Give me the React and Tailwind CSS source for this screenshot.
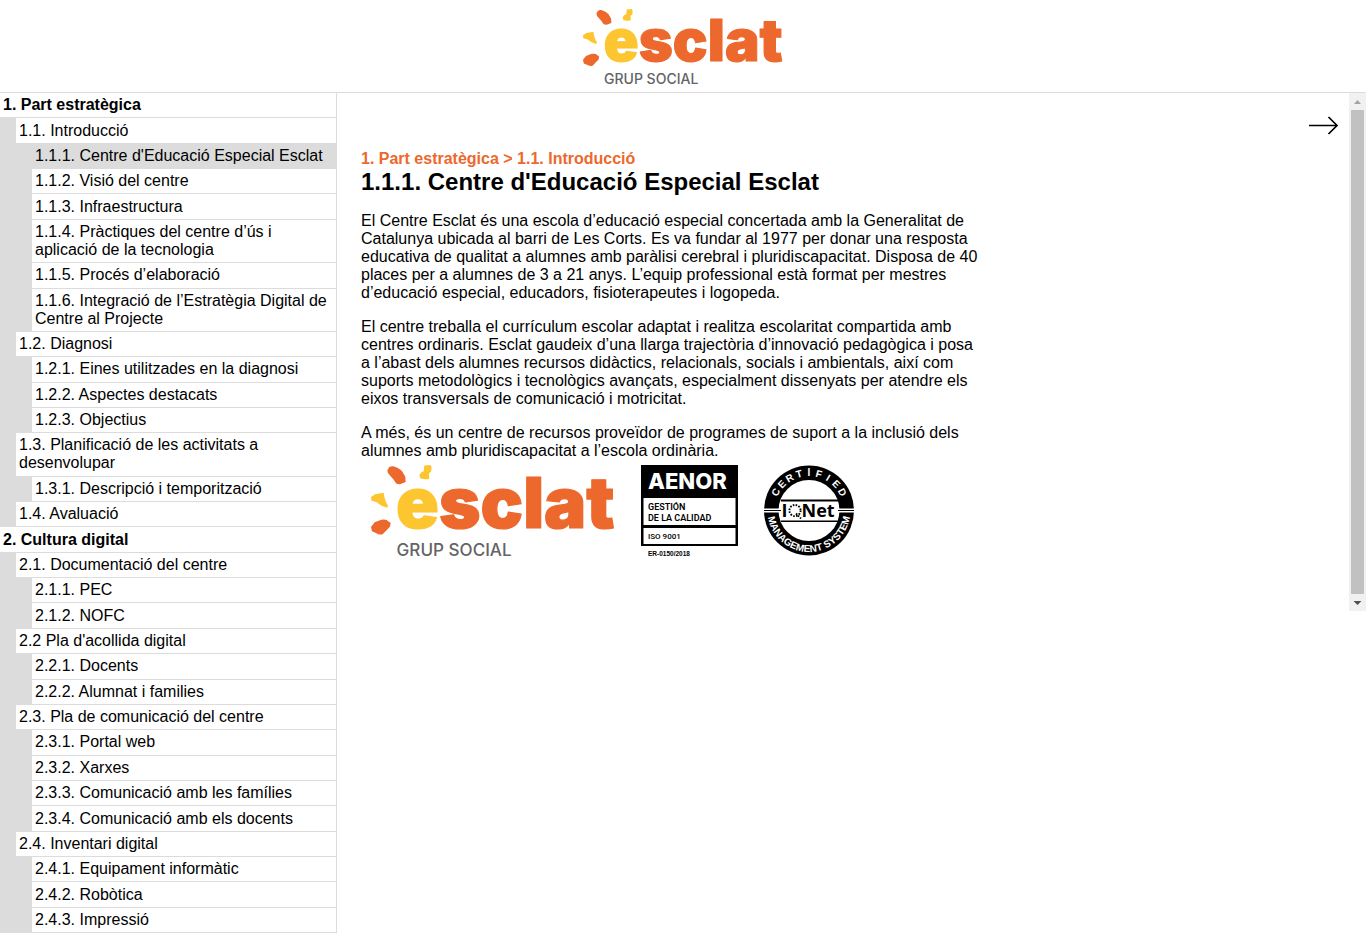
import React from "react";

const sections = [
  [1, "1. Part estratègica"],
  [2, "1.1. Introducció"],
  [3, "1.1.1. Centre d'Educació Especial Esclat"],
  [3, "1.1.2. Visió del centre"],
  [3, "1.1.3. Infraestructura"],
  [3, "1.1.4. Pràctiques del centre d’ús i aplicació de la tecnologia"],
  [3, "1.1.5. Procés d’elaboració"],
  [3, "1.1.6. Integració de l’Estratègia Digital de Centre al Projecte"],
  [2, "1.2. Diagnosi"],
  [3, "1.2.1. Eines utilitzades en la diagnosi"],
  [3, "1.2.2. Aspectes destacats"],
  [3, "1.2.3. Objectius"],
  [2, "1.3. Planificació de les activitats a desenvolupar"],
  [3, "1.3.1. Descripció i temporització"],
  [2, "1.4. Avaluació"],
  [1, "2. Cultura digital"],
  [2, "2.1. Documentació del centre"],
  [3, "2.1.1. PEC"],
  [3, "2.1.2. NOFC"],
  [2, "2.2 Pla d'acollida digital"],
  [3, "2.2.1. Docents"],
  [3, "2.2.2. Alumnat i families"],
  [2, "2.3. Pla de comunicació del centre"],
  [3, "2.3.1. Portal web"],
  [3, "2.3.2. Xarxes"],
  [3, "2.3.3. Comunicació amb les famílies"],
  [3, "2.3.4. Comunicació amb els docents"],
  [2, "2.4. Inventari digital"],
  [3, "2.4.1. Equipament informàtic"],
  [3, "2.4.2. Robòtica"],
  [3, "2.4.3. Impressió"],
];

const levelClass = {
  1: "font-bold",
  2: "border-l-[16px]",
  3: "border-l-[32px]",
};

const activeIndex = 2;

function EsclatLogo({ className }) {
  return (
    <svg viewBox="0 0 200 76" className={`overflow-visible ${className}`} role="img" aria-label="Esclat Grup Social">
      <g fill="#ed682c">
        <path d="M13.4 4.6 14.8 1.9Q16.500 .6 18.300 1.100L22.100 2.500 25.400 4.900 28.100 9.600 28.400 13.900 24.300 15.600Q22 16 20.500 15L18.300 11.700 15.600 8.700Q13.400 7 13.400 4.600Z" />
        <path d="M0 50.800 3 47 7.900 45.100Q10.500 44.200 12.800 45.100L16.100 47.500 15.600 50.500 12.600 53.600 9.600 56.800Q7.500 57.400 5.700 56.600L.8 54.400Z" />
      </g>
      <g fill="#fdc52f">
        <path d="M43.700 .5 48.900 0 49.700 1.900 49.200 5.500 47.500 6.800 47.800 11.200Q44 12.300 40.400 10.900L39.600 8.200 41.300 6 43.200 5.200Z" />
        <path d="M0 26.200 3.300 24 10.400 22.700 10.900 26 12 29.800 13.900 33.300 13.400 35 8.500 33.300 4.600 30.600 .3 29.200Z" />
      </g>
      <text x="20.500" y="52" fontFamily="Inter, sans-serif" fontWeight="900" fontSize="58" strokeWidth="1" strokeLinejoin="round">
        <tspan fill="#fdc52f" stroke="#fdc52f">e</tspan>
        <tspan fill="#ed682c" stroke="#ed682c">sclat</tspan>
      </text>
      <text x="21" y="75" fontFamily="Inter, sans-serif" fontWeight="500" fontSize="14" fill="#636466">
        GRUP SOCIAL
      </text>
    </svg>
  );
}

function AenorBadge() {
  return (
    <svg viewBox="0 0 97 93" className="w-[97px] shrink-0" role="img" aria-label="AENOR ISO 9001">
      <path d="M0 0H97V81H0Z" fill="#000" />
      <path d="M2.500 33H94.500V60H2.500ZM2.500 63H94.500V79H2.500Z" fill="#fff" />
      <text x="7" y="24" fontFamily="Inter, sans-serif" fontWeight="800" fontSize="22" fill="#fff">AENOR</text>
      <g fontFamily="Roboto, sans-serif" fill="#000">
        <text x="7" y="45" fontWeight="600" fontSize="9">GESTIÓN</text>
        <text x="7" y="56" fontWeight="600" fontSize="9">DE LA CALIDAD</text>
        <text x="7" y="74" fontWeight="500" fontSize="8">ISO 9001</text>
      </g>
      <text x="7" y="91" fontFamily="Liberation Sans, sans-serif" fontWeight="700" fontSize="6.500">ER-0150/2018</text>
    </svg>
  );
}

function IQNetBadge() {
  return (
    <svg viewBox="0 0 90 92" className="w-[90px] shrink-0" role="img" aria-label="IQNet Certified Management System">
      <defs>
        <path id="iqnet-top" d="M10.500 45.500A34.500 34.500 0 0 1 79.500 45.500" />
        <path id="iqnet-bottom" d="M3.500 45.500A41.500 41.500 0 0 0 86.500 45.500" />
      </defs>
      <circle cx="45" cy="45.500" r="45" fill="#000" />
      <circle cx="45" cy="45.500" r="30.500" fill="#fff" />
      <path d="M0 43.500H90V47.500H0Z" fill="#fff" />
      <path d="M0 45H90V46H0Z" fill="#000" />
      <path d="M17 35H74V57H17Z" fill="#fff" />
      <path d="M17 34.500H74V36.500H17ZM17 55.500H74V57H17Z" fill="#000" />
      <g fontFamily="Open Sans, sans-serif" fontWeight="700" fontSize="18" fill="#000">
        <text x="17.500" y="52">I</text>
        <text x="37.500" y="52">Net</text>
      </g>
      <circle cx="31" cy="45.500" r="5.600" fill="none" stroke="#000" strokeWidth="1.900" strokeDasharray="1.600 1.330" />
      <path d="M32 48.500 37 53.500" stroke="#000" strokeWidth="1.900" strokeDasharray="1.600 1.300" />
      <text fontFamily="Liberation Sans, sans-serif" fontWeight="700" fontSize="10" fill="#fff" textAnchor="middle">
        {"CERTIFIED".split("").map((letter, i) => (
          <textPath key={i} href="#iqnet-top" startOffset={`${16 + i * 8.5}%`}>{letter}</textPath>
        ))}
      </text>
      <text fontFamily="Liberation Sans, sans-serif" fontWeight="700" fontSize="10" fill="#fff" textAnchor="middle">
        <textPath href="#iqnet-bottom" startOffset="50%">MANAGEMENT SYSTEM</textPath>
      </text>
    </svg>
  );
}

function ScrollBar() {
  return (
    <div className="flex w-[17px] shrink-0 flex-col bg-[#f1f1f1]" aria-hidden="true">
      <svg viewBox="0 0 17 17" className="h-[17px] w-[17px]">
        <path d="M5 11 8.500 7 12 11Z" fill="#a3a3a3" />
      </svg>
      <div className="mx-0.5 flex-1 bg-[#c1c1c1]" />
      <svg viewBox="0 0 17 17" className="h-[17px] w-[17px]">
        <path d="M4.500 7H12.500L8.500 11Z" fill="#505050" />
      </svg>
    </div>
  );
}

export default function App() {
  return (
    <div className="min-h-screen bg-white font-['Liberation_Sans',Arial,sans-serif] text-base leading-[18px] text-black">
      <header className="flex justify-center border-b border-[#dcdcdc] pt-[9px] pb-[7px]">
        <EsclatLogo className="w-[200px]" />
      </header>

      <div className="flex items-start">
        <nav aria-label="Índex" className="w-[337px] shrink-0 border-r border-[#dcdcdc]">
          <ul className="flex min-h-[840px] flex-col">
            {sections.map(([level, title], i) => (
              <li
                key={title}
                className={`flex flex-auto items-center border-b border-[#dcdcdc] ${levelClass[level]} ${i === activeIndex ? "bg-[#dcdcdc]" : ""}`}
              >
                <a href="#contingut" aria-current={i === activeIndex ? "page" : undefined} className="block w-full p-[3px]">
                  {title}
                </a>
              </li>
            ))}
          </ul>
        </nav>

        <div className="flex min-w-0 flex-1">
          <main id="contingut" className="min-w-0 flex-1 pt-[22px] pr-[10px] pb-[53px] pl-6">
            <div className="flex justify-end">
              <a href="#seguent" aria-label="Següent">
                <svg viewBox="0 0 32 22" className="h-[22px] w-8" fill="none" stroke="#000" strokeWidth="1.700">
                  <path d="M2 10.500H30M21.500 2 30 10.500 21.500 19" />
                </svg>
              </a>
            </div>
            <p className="mt-[13px] font-bold text-[#ed682c]">1. Part estratègica &gt; 1.1. Introducció</p>
            <h1 className="text-2xl leading-[28px] font-bold">1.1.1. Centre d'Educació Especial Esclat</h1>
            <div className="mt-4 flex max-w-[624px] flex-col gap-4">
              <p>
                El Centre Esclat és una escola d’educació especial concertada amb la Generalitat de Catalunya ubicada al
                barri de Les Corts. Es va fundar al 1977 per donar una resposta educativa de qualitat a alumnes amb
                paràlisi cerebral i pluridiscapacitat. Disposa de 40 places per a alumnes de 3 a 21 anys. L’equip
                professional està format per mestres d’educació especial, educadors, fisioterapeutes i logopeda.
              </p>
              <p>
                El centre treballa el currículum escolar adaptat i realitza escolaritat compartida amb centres
                ordinaris. Esclat gaudeix d’una llarga trajectòria d’innovació pedagògica i posa a l’abast dels alumnes
                recursos didàctics, relacionals, socials i ambientals, així com suports metodològics i tecnològics
                avançats, especialment dissenyats per atendre els eixos transversals de comunicació i motricitat.
              </p>
              <p>
                A més, és un centre de recursos proveïdor de programes de suport a la inclusió dels alumnes amb
                pluridiscapacitat a l’escola ordinària.
              </p>
            </div>
            <div className="mt-[5px] flex items-start gap-[26px] pl-[10px]">
              <EsclatLogo className="w-[244px] shrink-0" />
              <AenorBadge />
              <IQNetBadge />
            </div>
          </main>
          <ScrollBar />
        </div>
      </div>
    </div>
  );
}
